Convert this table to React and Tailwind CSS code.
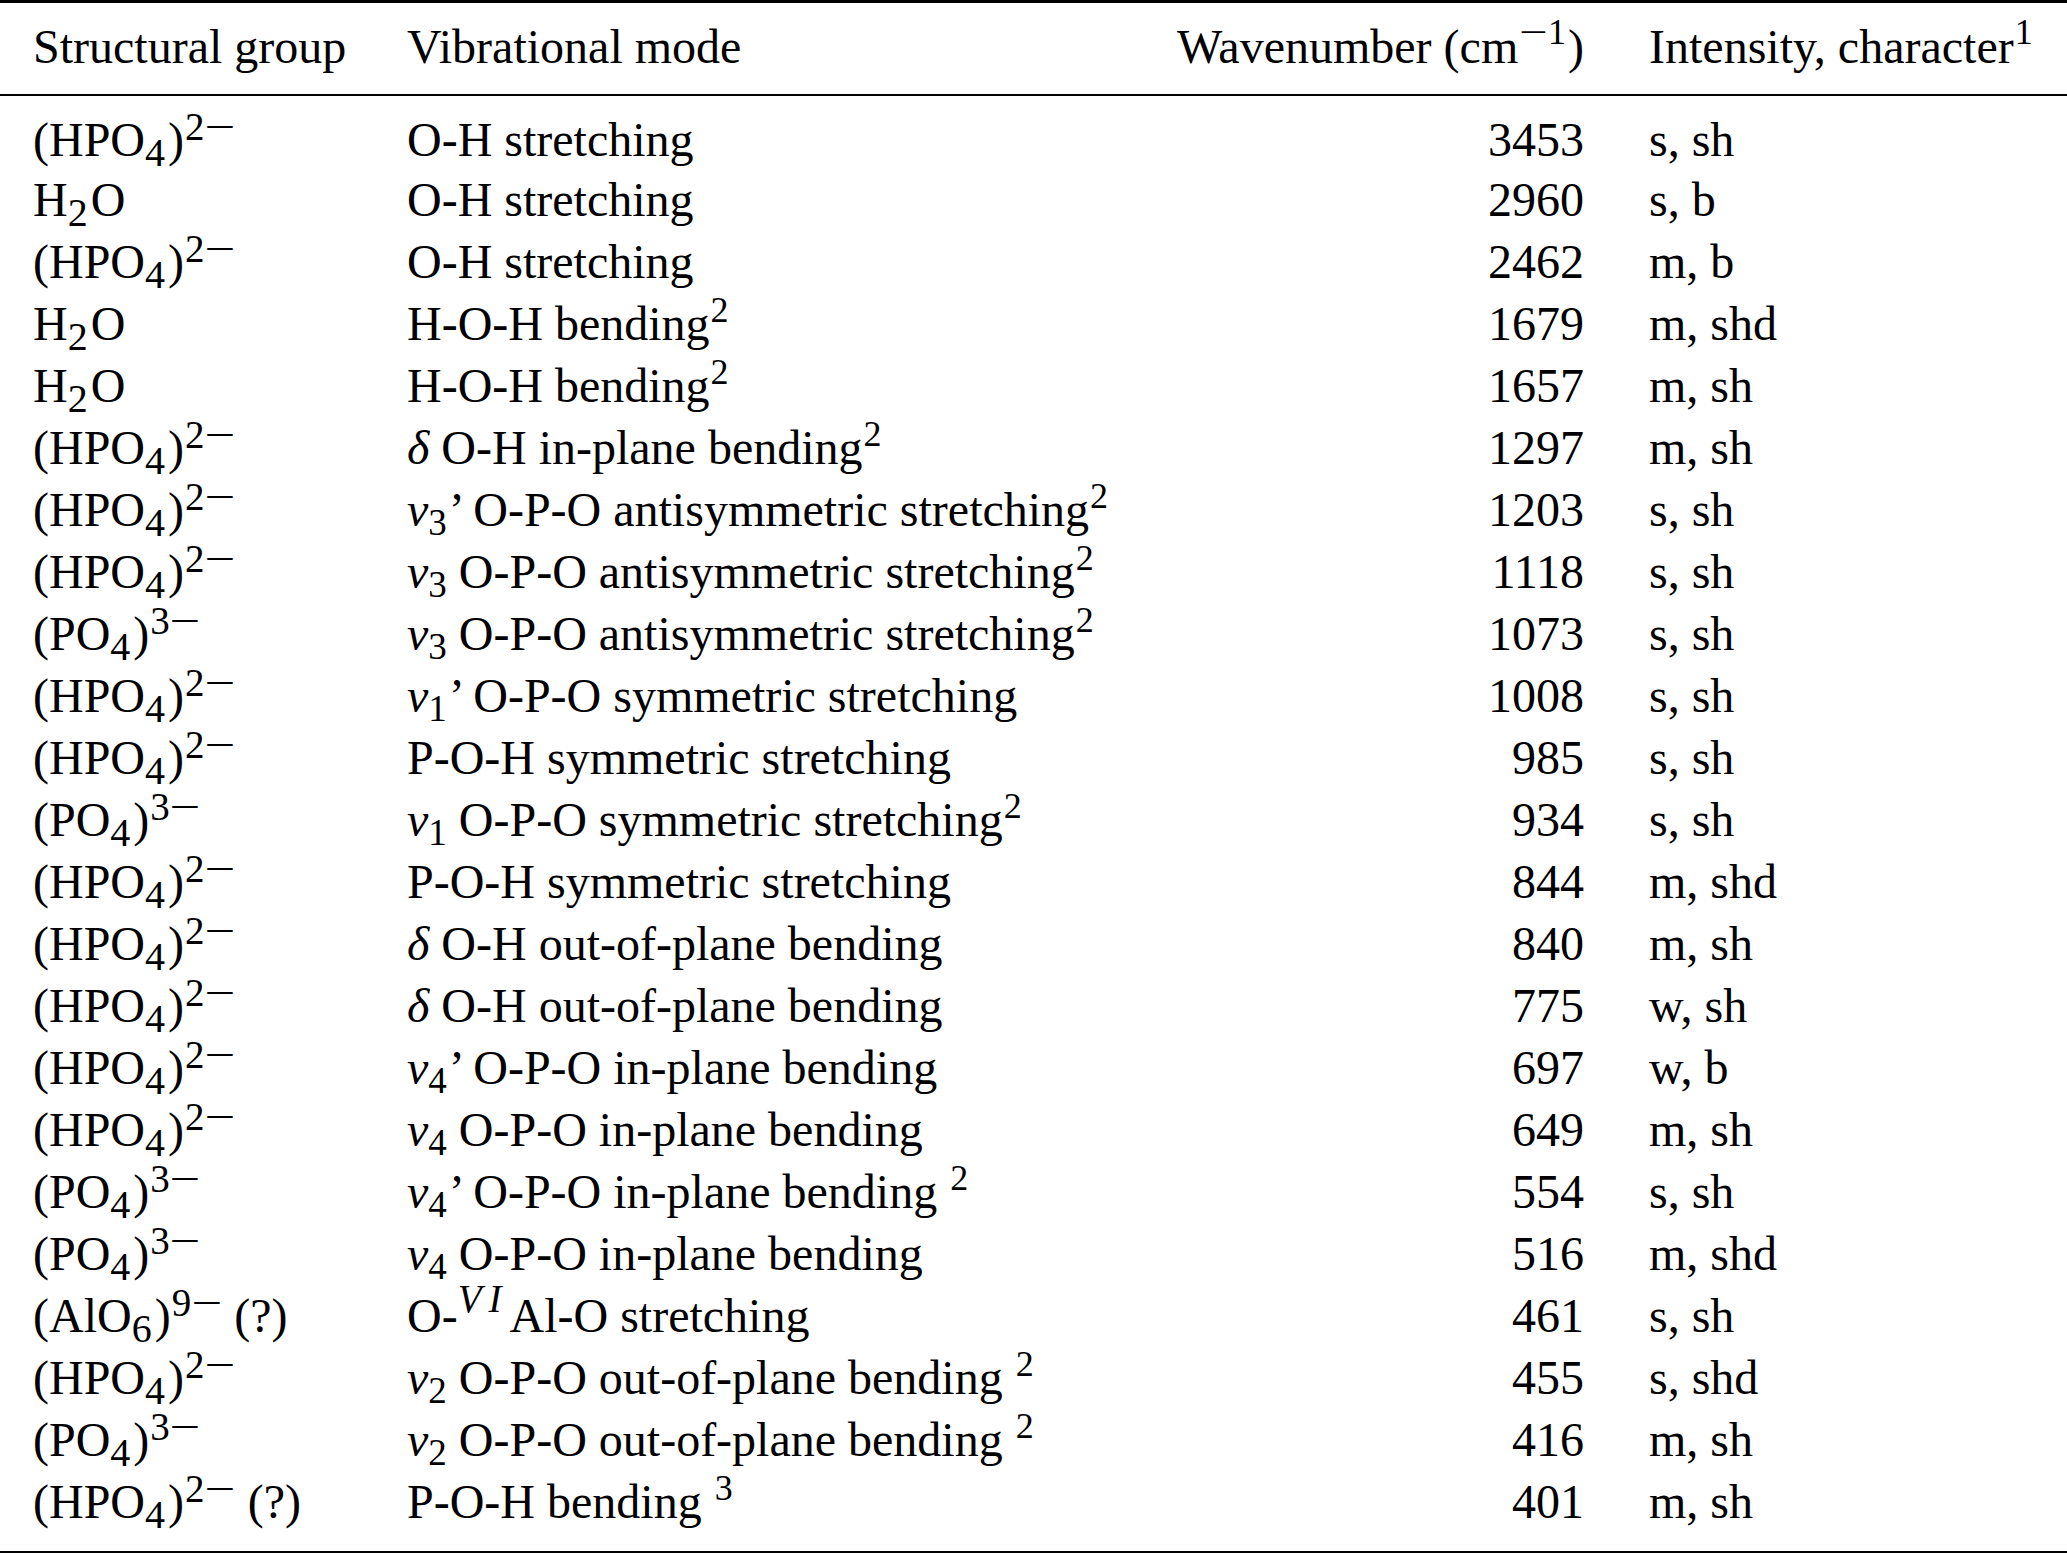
// math-style minus: wider than the text glyph
const Minus = () => (
  <span className="inline-block w-[0.8em] text-center">
    <span className="inline-block scale-x-[1.4]">−</span>
  </span>
);

const Sb = ({ children }) => (
  <span className="relative top-[10px] text-[40px] leading-none mr-[3px]">{children}</span>
);

const Sp = ({ children }) => (
  <span className="relative -top-[16px] text-[39px] leading-none ml-[1px]">{children}</span>
);

// footnote superscripts
const Fn = ({ children }) => (
  <span className="relative -top-[18px] text-[36px] leading-none ml-[1px]">{children}</span>
);

const Nu = ({ n, prime }) => (
  <>
    <i>ν</i>
    <span className="relative top-[9px] text-[37px] leading-none">{n}</span>
    {prime && <span className="ml-[2px]">’</span>}
  </>
);

const Delta = () => <i>δ</i>;

const HPO4 = ({ q }) => (
  <>
    (HPO<Sb>4</Sb>)
    <Sp>
      2<Minus />
    </Sp>
    {q && " (?)"}
  </>
);

const PO4 = () => (
  <>
    (PO<Sb>4</Sb>)
    <Sp>
      3<Minus />
    </Sp>
  </>
);

const H2O = () => (
  <>
    H<Sb>2</Sb>O
  </>
);

const rows = [
  [<HPO4 />, <>O-H stretching</>, "3453", "s, sh"],
  [<H2O />, <>O-H stretching</>, "2960", "s, b"],
  [<HPO4 />, <>O-H stretching</>, "2462", "m, b"],
  [<H2O />, <>H-O-H bending<Fn>2</Fn></>, "1679", "m, shd"],
  [<H2O />, <>H-O-H bending<Fn>2</Fn></>, "1657", "m, sh"],
  [<HPO4 />, <><Delta /> O-H in-plane bending<Fn>2</Fn></>, "1297", "m, sh"],
  [<HPO4 />, <><Nu n="3" prime /> O-P-O antisymmetric stretching<Fn>2</Fn></>, "1203", "s, sh"],
  [<HPO4 />, <><Nu n="3" /> O-P-O antisymmetric stretching<Fn>2</Fn></>, "1118", "s, sh"],
  [<PO4 />, <><Nu n="3" /> O-P-O antisymmetric stretching<Fn>2</Fn></>, "1073", "s, sh"],
  [<HPO4 />, <><Nu n="1" prime /> O-P-O symmetric stretching</>, "1008", "s, sh"],
  [<HPO4 />, <>P-O-H symmetric stretching</>, "985", "s, sh"],
  [<PO4 />, <><Nu n="1" /> O-P-O symmetric stretching<Fn>2</Fn></>, "934", "s, sh"],
  [<HPO4 />, <>P-O-H symmetric stretching</>, "844", "m, shd"],
  [<HPO4 />, <><Delta /> O-H out-of-plane bending</>, "840", "m, sh"],
  [<HPO4 />, <><Delta /> O-H out-of-plane bending</>, "775", "w, sh"],
  [<HPO4 />, <><Nu n="4" prime /> O-P-O in-plane bending</>, "697", "w, b"],
  [<HPO4 />, <><Nu n="4" /> O-P-O in-plane bending</>, "649", "m, sh"],
  [<PO4 />, <><Nu n="4" prime /> O-P-O in-plane bending <Fn>2</Fn></>, "554", "s, sh"],
  [<PO4 />, <><Nu n="4" /> O-P-O in-plane bending</>, "516", "m, shd"],
  [
    <>
      (AlO<Sb>6</Sb>)
      <Sp>
        9<Minus />
      </Sp>{" "}
      (?)
    </>,
    <>
      O-
      <span className="relative -top-[20px] text-[39px] italic leading-none pr-[8px]">
        V<span className="ml-[7px]">I</span>
      </span>
      Al-O stretching
    </>,
    "461",
    "s, sh",
  ],
  [<HPO4 />, <><Nu n="2" /> O-P-O out-of-plane bending <Fn>2</Fn></>, "455", "s, shd"],
  [<PO4 />, <><Nu n="2" /> O-P-O out-of-plane bending <Fn>2</Fn></>, "416", "m, sh"],
  [<HPO4 q />, <>P-O-H bending <Fn>3</Fn></>, "401", "m, sh"],
];

const Row = ({ cells, first }) => (
  <div
    className={`grid grid-cols-[374px_779px_398px_1fr] pl-[33px] ${
      first ? "h-[59.5px]" : "h-[62px]"
    }`}
  >
    <div>{cells[0]}</div>
    <div>{cells[1]}</div>
    <div className="text-right">{cells[2]}</div>
    <div className="pl-[65px]">{cells[3]}</div>
  </div>
);

export default function App() {
  return (
    <div className="w-[2067px] h-[1553px] overflow-hidden bg-white text-black font-['Liberation_Serif',serif] text-[48px] leading-[62px] whitespace-nowrap">
      <div className="h-[3px] bg-black" />
      <div className="pt-[13px] pb-[16px]">
        <div className="grid grid-cols-[374px_779px_398px_1fr] pl-[33px] h-[62px]">
          <div>Structural group</div>
          <div>Vibrational mode</div>
          <div className="-ml-[40px] text-right">
            Wavenumber (cm
            <span className="relative -top-[19px] text-[36px] leading-none ml-[1px] mr-[2px]">
              <Minus />1
            </span>
            )
          </div>
          <div className="pl-[65px]">
            Intensity, character
            <span className="relative -top-[19px] text-[36px] leading-none ml-[1px]">1</span>
          </div>
        </div>
      </div>
      <div className="h-[2px] bg-black" />
      <div className="pt-[13px]">
        {rows.map((r, i) => (
          <Row key={i} cells={r} first={i === 0} />
        ))}
      </div>
      <div className="mt-[18px] h-[3px] bg-black" />
    </div>
  );
}
